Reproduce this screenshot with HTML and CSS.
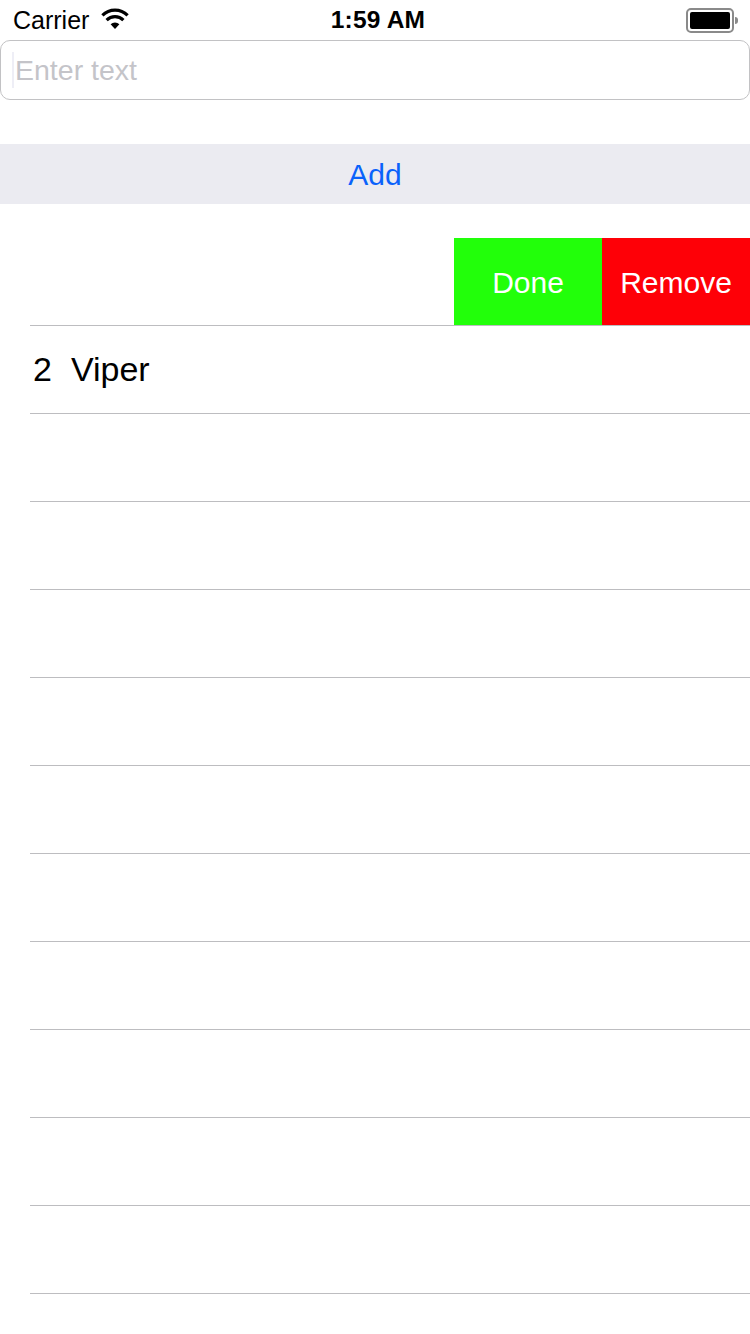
FILE: index.html
```html
<!DOCTYPE html>
<html>
<head>
<meta charset="utf-8">
<link rel="stylesheet" href="styles.css">
</head>
<body>
<div class="screen">
  <div class="status">
    <div class="status-left">
      <span class="carrier">Carrier</span>
      <svg class="wifi" width="28" height="22" viewBox="0 0 28 22">
        <path d="M14 21 L9.6 16.2 A6.4 6.4 0 0 1 18.4 16.2 Z" fill="#000"/>
        <path d="M5.6 12.1 A12 12 0 0 1 22.4 12.1" fill="none" stroke="#000" stroke-width="3.2" stroke-linecap="butt"/>
        <path d="M1.4 7.3 A18 18 0 0 1 26.6 7.3" fill="none" stroke="#000" stroke-width="3.2" stroke-linecap="butt"/>
      </svg>
    </div>
    <div class="time">1:59 AM</div>
    <div class="status-right">
      <div class="battery"><div class="battery-fill"></div></div>
      <div class="battery-nub"></div>
    </div>
  </div>

  <div class="field">
    <span class="caret"></span>
    <span class="placeholder">Enter text</span>
  </div>

  <div class="add-btn">Add</div>

  <div class="table">
    <div class="row swiped">
      <div class="row-content"></div>
      <div class="action done">Done</div>
      <div class="action remove">Remove</div>
    </div>
    <div class="row">
      <div class="row-content cell"><span class="num">2</span><span class="name">Viper</span></div>
    </div>
    <div class="row"><div class="row-content"></div></div>
    <div class="row"><div class="row-content"></div></div>
    <div class="row"><div class="row-content"></div></div>
    <div class="row"><div class="row-content"></div></div>
    <div class="row"><div class="row-content"></div></div>
    <div class="row"><div class="row-content"></div></div>
    <div class="row"><div class="row-content"></div></div>
    <div class="row"><div class="row-content"></div></div>
    <div class="row"><div class="row-content"></div></div>
    <div class="row"><div class="row-content"></div></div>
  </div>
</div>
</body>
</html>
```

FILE: styles.css
```css
html, body {
  margin: 0;
  padding: 0;
  background: #fff;
}
body {
  font-family: "Liberation Sans", Arial, sans-serif;
  color: #000;
}
.screen {
  width: 750px;
  height: 1334px;
  overflow: hidden;
  display: flex;
  flex-direction: column;
}
.status {
  height: 40px;
  display: flex;
  align-items: center;
  justify-content: space-between;
  padding: 0 13px;
  box-sizing: border-box;
  position: relative;
}
.status-left {
  display: flex;
  align-items: center;
  gap: 12px;
  width: 200px;
}
.carrier {
  font-size: 25px;
}
.wifi {
  margin-top: -2px;
}
.time {
  font-size: 24.5px;
  font-weight: bold;
  letter-spacing: 0.2px;
  position: absolute;
  left: 0;
  right: 0;
  text-align: center;
  top: 6px;
  padding-left: 6px;
}
.status-right {
  display: flex;
  align-items: center;
  width: 200px;
  justify-content: flex-end;
  margin-right: -1px;
}
.battery {
  width: 40px;
  height: 17px;
  border: 2px solid #8a8a8a;
  border-radius: 5px;
  padding: 2px;
  box-sizing: content-box;
}
.battery-fill {
  width: 100%;
  height: 100%;
  background: #000;
  border-radius: 2px;
}
.battery-nub {
  width: 3px;
  height: 7px;
  background: #8a8a8a;
  border-radius: 0 3px 3px 0;
  margin-left: 1px;
}
.field {
  height: 60px;
  border: 1px solid #c2c2c4;
  border-radius: 10px;
  box-sizing: border-box;
  display: flex;
  align-items: center;
  padding-left: 11px;
  width: 750px;
}
.caret {
  width: 2px;
  height: 36px;
  background: #eeeef6;
  margin-right: 1px;
}
.placeholder {
  font-size: 28.5px;
  color: #c4c4c9;
  margin-top: 1px;
}
.add-btn {
  margin-top: 44px;
  height: 60px;
  background: #ebebf1;
  color: #0a62fb;
  font-size: 30px;
  display: flex;
  align-items: center;
  justify-content: center;
  padding-top: 2px;
  box-sizing: border-box;
}
.table {
  margin-top: 34px;
  display: flex;
  flex-direction: column;
}
.row {
  height: 87px;
  display: flex;
  flex: none;
  position: relative;
  border-bottom: 1px solid transparent;
}
.row::after {
  content: "";
  position: absolute;
  left: 30px;
  right: 0;
  bottom: -1px;
  height: 1px;
  background: #bdbdc0;
}
.row-content {
  flex: 1;
}
.cell {
  display: flex;
  align-items: center;
  padding-left: 33px;
  gap: 19px;
  font-size: 34px;
}
.action {
  width: 148px;
  display: flex;
  align-items: center;
  justify-content: center;
  color: #fff;
  font-size: 30px;
  padding-top: 2px;
  box-sizing: border-box;
}
.done {
  background: #22ff0a;
}
.remove {
  background: #fe0007;
}
```
